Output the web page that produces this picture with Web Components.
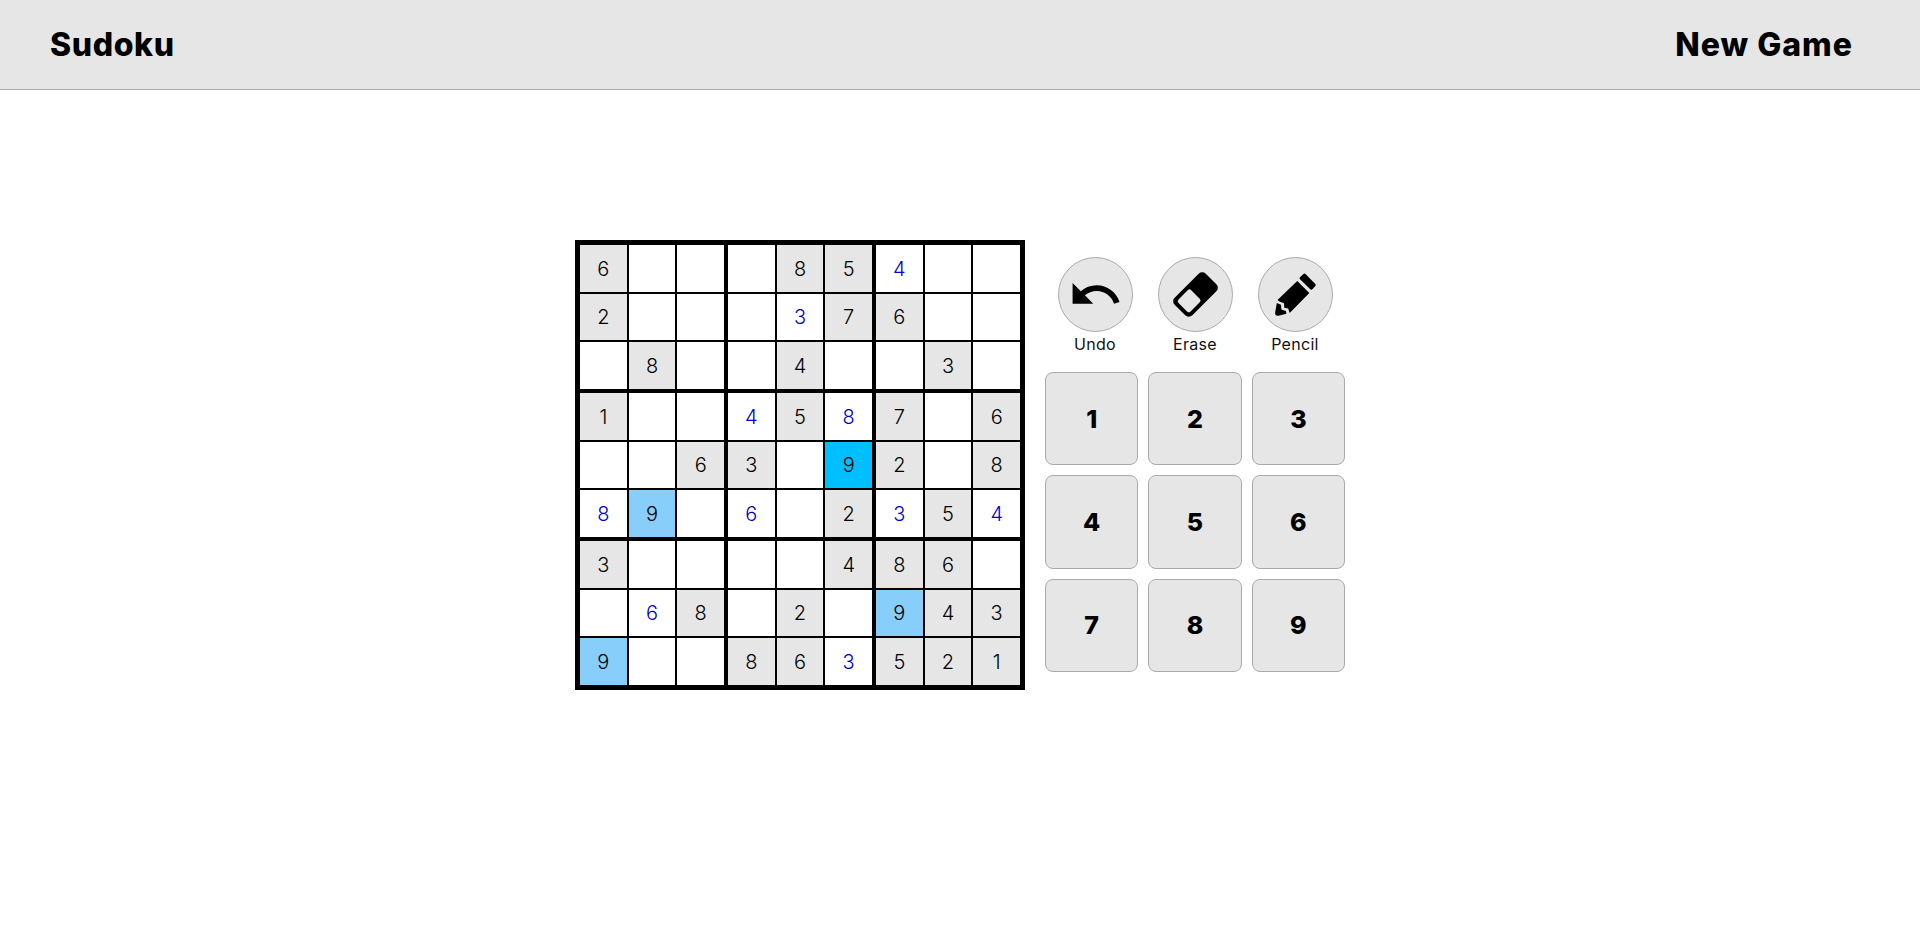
<!DOCTYPE html>
<html lang="en">
<head>
    <meta charset="UTF-8">
    <title>Sudoku</title>
    <style>
        body{
            margin: 0;
            background: #fff;
            font-family: Inter, "Liberation Sans", sans-serif;
            color: #000;
        }
    </style>
</head>
<body>
    <sudoku-app></sudoku-app>

    <script>
        class AppHeader extends HTMLElement{
            constructor(){
                super()
                this.attachShadow({mode:'open'});
                this.shadowRoot.innerHTML = `
<style>
:host {
display: flex;
justify-content: space-between;
align-items: center;
box-sizing: border-box;
height: 90px;
padding: 0 67px 0 50px;
background: #e6e6e6;
border-bottom: 1px solid #aaa;
font-size: 32px;
font-weight: 800;
}
.left { letter-spacing: .6px; }
.right { letter-spacing: 1px; }
</style>
<span class="left"><slot name="left"></slot></span>
<span class="right"><slot name="right"></slot></span>
`;
            }
        }
        customElements.define("app-header", AppHeader);

        class SudokuCell extends HTMLElement{
            constructor(){
                super()
                this.attachShadow({mode:'open'});
                this.shadowRoot.innerHTML = `
<style>
:host {
display: flex;
align-items: center;
justify-content: center;
box-sizing: border-box;
padding-top: 1px;
background: #fff;
font-size: 20px;
font-weight: 300;
color: #000;
min-width: 0;
}
:host([given]) { background: #e6e6e6; }
:host([entered]) { color: #0000cd; }
:host([match]) { background: #87cefa; }
:host([selected]) { background: #00bfff; }
</style>
<slot></slot>
`;
            }
        }
        customElements.define("sudoku-cell", SudokuCell);

        class SudokuBox extends HTMLElement{
            constructor(){
                super()
                this.attachShadow({mode:'open'});
                this.shadowRoot.innerHTML = `
<style>
:host {
display: grid;
grid-template-columns: repeat(3, 1fr);
grid-template-rows: repeat(3, 1fr);
gap: 2px;
}
</style>
<slot></slot>
`;
            }
        }
        customElements.define("sudoku-box", SudokuBox);

        // each row: digit, then b = filled in by player, h = same digit, s = selected
        const PUZZLE = [
            ['6','','', '','8','5', '4b','',''],
            ['2','','', '','3b','7', '6','',''],
            ['','8','', '','4','', '','3',''],
            ['1','','', '4b','5','8b', '7','','6'],
            ['','','6', '3','','9s', '2','','8'],
            ['8b','9h','', '6b','','2', '3b','5','4b'],
            ['3','','', '','','4', '8','6',''],
            ['','6b','8', '','2','', '9h','4','3'],
            ['9h','','', '8','6','3b', '5','2','1'],
        ]

        class SudokuBoard extends HTMLElement{
            constructor(){
                super()
                this.attachShadow({mode:'open'});
                this.shadowRoot.innerHTML = `
<style>
:host {
display: grid;
box-sizing: border-box;
width: 450px;
height: 450px;
flex: none;
grid-template-columns: repeat(3, 144px);
grid-template-rows: repeat(3, 144px);
gap: 4px;
border: 5px solid #000;
background: #000;
}
</style>
`;
                for(let boxRow = 0; boxRow < 3; boxRow++){
                    for(let boxCol = 0; boxCol < 3; boxCol++){
                        const box = document.createElement('sudoku-box')
                        for(let r = boxRow*3; r < boxRow*3+3; r++){
                            for(let c = boxCol*3; c < boxCol*3+3; c++){
                                const v = PUZZLE[r][c]
                                const cell = document.createElement('sudoku-cell')
                                cell.textContent = v.charAt(0)
                                if(v.endsWith('b')) cell.setAttribute('entered','')
                                else if(v.endsWith('h')) cell.setAttribute('match','')
                                else if(v.endsWith('s')) cell.setAttribute('selected','')
                                else if(v) cell.setAttribute('given','')
                                box.append(cell)
                            }
                        }
                        this.shadowRoot.append(box)
                    }
                }
            }
        }
        customElements.define("sudoku-board", SudokuBoard);

        class ToolButton extends HTMLElement{
            constructor(){
                super()
                this.attachShadow({mode:'open'});
                this.shadowRoot.innerHTML = `
<style>
:host {
display: flex;
flex-direction: column;
align-items: center;
font-size: 16px;
letter-spacing: .3px;
line-height: 24px;
color: #111;
}
.circle {
box-sizing: border-box;
width: 75px;
height: 75px;
border: 1px solid #aaa;
border-radius: 50%;
background: #e6e6e6;
display: flex;
align-items: center;
justify-content: center;
}
</style>
<div class="circle"><slot name="icon"></slot></div>
<slot></slot>
`;
            }
        }
        customElements.define("tool-button", ToolButton);

        class NumKey extends HTMLElement{
            constructor(){
                super()
                this.attachShadow({mode:'open'});
                this.shadowRoot.innerHTML = `
<style>
:host {
display: flex;
align-items: center;
justify-content: center;
box-sizing: border-box;
aspect-ratio: 1;
border: 1px solid #aaa;
border-radius: 8px;
background: #e6e6e6;
font-size: 25px;
font-weight: 800;
}
</style>
<slot></slot>
`;
            }
        }
        customElements.define("num-key", NumKey);

        class ControlPanel extends HTMLElement{
            constructor(){
                super()
                this.attachShadow({mode:'open'});
                this.shadowRoot.innerHTML = `
<style>
:host {
display: block;
width: 300px;
flex: none;
}
.tools {
display: grid;
grid-template-columns: repeat(3, 100px);
padding: 17px 0 16px;
}
.keys {
display: grid;
grid-template-columns: repeat(3, 1fr);
gap: 10px;
}
svg { display: block; }
</style>
<div class="tools">
    <tool-button>
        <svg slot="icon" width="55" height="55" viewBox="0 0 24 24"><path d="M12.5 8c-2.65 0-5.05.99-6.9 2.6L2 7v9h9l-3.62-3.62c1.39-1.16 3.16-1.88 5.12-1.88 3.54 0 6.55 2.31 7.6 5.5l2.37-.78C21.08 11.03 17.15 8 12.5 8z"/></svg>
        Undo
    </tool-button>
    <tool-button>
        <svg slot="icon" width="73" height="73" viewBox="0 0 73 73"><g transform="rotate(-45 36.5 36.5)"><rect x="14.5" y="24" width="44" height="25" rx="5"/><rect x="18.5" y="28" width="18" height="17" rx="2.5" fill="#e6e6e6"/></g></svg>
        Erase
    </tool-button>
    <tool-button>
        <svg slot="icon" width="73" height="73" viewBox="0 0 75 75"><path d="M46.7 17.5 56.8 27.7 53.7 31 43.2 20.8Z" stroke="#000" stroke-width="3" stroke-linejoin="round"/><path d="M39.3 23.7 51.7 36 31.5 56.5 30 52 26 51 25.7 46.5 21.5 45 19 43.2Z"/><path d="M18.3 46.2 22.6 48 23 53 27.6 54.5 28.2 57.2 20 59.3 Q16.3 59.8 16.6 56Z"/></svg>
        Pencil
    </tool-button>
</div>
<div class="keys">
    <num-key>1</num-key><num-key>2</num-key><num-key>3</num-key>
    <num-key>4</num-key><num-key>5</num-key><num-key>6</num-key>
    <num-key>7</num-key><num-key>8</num-key><num-key>9</num-key>
</div>
`;
            }
        }
        customElements.define("control-panel", ControlPanel);

        class SudokuApp extends HTMLElement{
            constructor(){
                super()
                this.attachShadow({mode:'open'});
                this.shadowRoot.innerHTML = `
<style>
:host { display: block; }
main {
display: flex;
justify-content: center;
align-items: flex-start;
gap: 20px;
padding-top: 150px;
}
</style>
<app-header>
    <span slot="left">Sudoku</span>
    <span slot="right">New Game</span>
</app-header>
<main>
    <sudoku-board></sudoku-board>
    <control-panel></control-panel>
</main>
`;
            }
        }
        customElements.define("sudoku-app", SudokuApp);
    </script>
</body>
</html>
